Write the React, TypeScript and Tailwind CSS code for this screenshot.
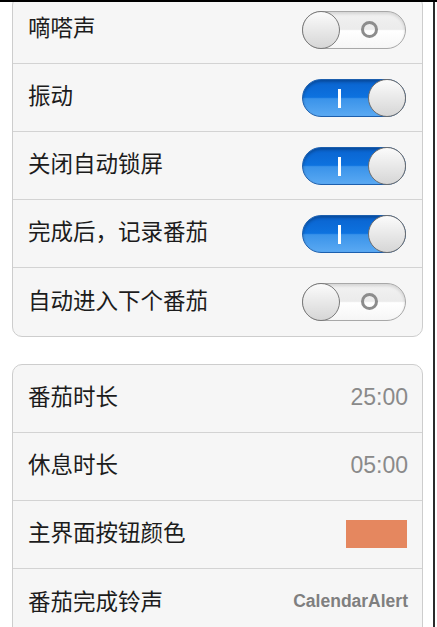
import React from 'react';

type Row =
  | { label: string; kind: 'toggle'; on: boolean }
  | { label: string; kind: 'value'; value: string }
  | { label: string; kind: 'color'; color: string }
  | { label: string; kind: 'sound'; value: string };

const switches: Row[] = [
  { label: '嘀嗒声', kind: 'toggle', on: false },
  { label: '振动', kind: 'toggle', on: true },
  { label: '关闭自动锁屏', kind: 'toggle', on: true },
  { label: '完成后，记录番茄', kind: 'toggle', on: true },
  { label: '自动进入下个番茄', kind: 'toggle', on: false },
];

const timers: Row[] = [
  { label: '番茄时长', kind: 'value', value: '25:00' },
  { label: '休息时长', kind: 'value', value: '05:00' },
  { label: '主界面按钮颜色', kind: 'color', color: '#e5875f' },
  { label: '番茄完成铃声', kind: 'sound', value: 'CalendarAlert' },
];

const Toggle: React.FC<{ on: boolean }> = ({ on }) => {
  if (on) {
    return (
      <div className="relative w-[104px] h-[38px] rounded-full border border-[#1c5fae] bg-[linear-gradient(to_bottom,#0a63cf_0%,#0d72df_48%,#3a93ea_52%,#5aa9f2_100%)] shadow-[inset_0_2px_3px_rgba(0,0,0,0.25)]">
        <div className="absolute left-[35px] top-[9px] w-[3px] h-[19px] bg-white" />
        <div className="absolute right-[-1px] top-[-1px] w-[38px] h-[38px] rounded-full border border-[#6f6f6f] bg-[linear-gradient(to_bottom,#fbfbfb,#d6d6d6)]" />
      </div>
    );
  }
  return (
    <div className="relative w-[104px] h-[38px] rounded-full border border-[#a8a8a8] bg-[linear-gradient(to_bottom,#f2f2f2_0%,#ebebeb_48%,#ffffff_52%,#f6f6f6_100%)] shadow-[inset_0_2px_3px_rgba(0,0,0,0.12)]">
      <div className="absolute left-[58px] top-[9px] w-[17px] h-[17px] rounded-full border-[3px] border-[#8c8c8c]" />
      <div className="absolute left-[-1px] top-[-1px] w-[38px] h-[38px] rounded-full border border-[#7a7a7a] bg-[linear-gradient(to_bottom,#fbfbfb,#d6d6d6)]" />
    </div>
  );
};

const RowView: React.FC<{ row: Row; last: boolean }> = ({ row, last }) => (
  <div
    className={`flex items-center justify-between h-[68px] pl-[15px] ${
      row.kind === 'toggle' ? 'pr-[16px]' : 'pr-[14px]'
    } ${last ? '' : 'border-b border-[#d3d3d3]'}`}
  >
    <span className="pb-[6px] text-[22.5px] leading-none text-[#1c1c1c] font-['Noto_Sans_CJK_SC',sans-serif]">
      {row.label}
    </span>
    {row.kind === 'toggle' && <Toggle on={row.on} />}
    {row.kind === 'value' && (
      <span className="pb-[3px] text-[23px] leading-none text-[#8a8a8a] font-['Liberation_Sans',sans-serif]">
        {row.value}
      </span>
    )}
    {row.kind === 'color' && (
      <div className="w-[61px] h-[28px] mr-[1px] mb-[2px]" style={{ backgroundColor: row.color }} />
    )}
    {row.kind === 'sound' && (
      <span className="pb-[3px] text-[17.5px] leading-none font-bold text-[#7f7f7f] font-['Liberation_Sans',sans-serif]">
        {row.value}
      </span>
    )}
  </div>
);

const Card: React.FC<{ rows: Row[]; className?: string }> = ({ rows, className }) => (
  <div className={`w-[411px] ml-[12px] rounded-[10px] border border-[#cdcdcd] bg-[#f6f6f6] ${className ?? ''}`}>
    {rows.map((r, i) => (
      <RowView key={r.label} row={r} last={i === rows.length - 1} />
    ))}
  </div>
);

export default function App() {
  return (
    <div className="w-[437px] h-[627px] flex bg-white overflow-hidden border-t-2 border-black">
      <div className="w-[433px] h-full overflow-hidden">
        <Card rows={switches} className="-mt-[7px]" />
        <Card rows={timers} className="mt-[27px]" />
      </div>
      <div className="w-[2px] h-full bg-[#2a2a2a]" />
      <div className="flex-1" />
    </div>
  );
}
